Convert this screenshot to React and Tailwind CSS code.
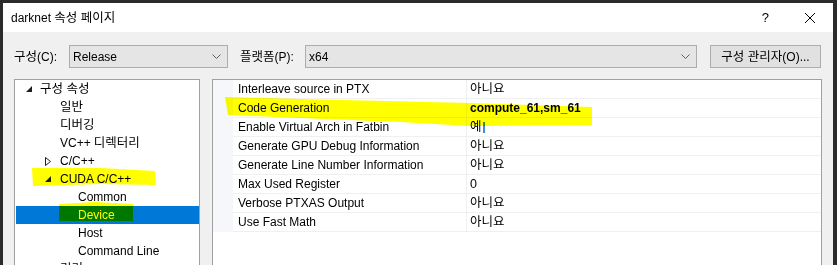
import React from "react";

const Chevron = () => (
  <svg width="9" height="6" viewBox="0 0 9 6" className="shrink-0">
    <polyline points="0.5,0.5 4.5,4.5 8.5,0.5" fill="none" stroke="#606060" strokeWidth="1" />
  </svg>
);

const Combo = ({ w, text }) => (
  <div className={`${w} h-[23px] flex items-center border border-[#acacac] bg-[#e5e5e5] pl-[3px] pr-[6px] shrink-0`}>
    <span className="flex-1 leading-[14px]">{text}</span>
    <Chevron />
  </div>
);

const Filled = () => (
  <svg width="7" height="7" viewBox="0 0 7 7" className="shrink-0">
    <polygon points="6,0 6,6 0,6" fill="#1e1e1e" />
  </svg>
);

const Hollow = () => (
  <svg width="7" height="9" viewBox="0 0 7 9" className="shrink-0">
    <polygon points="0.5,0.5 5.5,4.5 0.5,8.5" fill="none" stroke="#1e1e1e" strokeWidth="1" />
  </svg>
);

const rows = [
  ["Interleave source in PTX", "아니요"],
  ["Code Generation", "compute_61,sm_61", true],
  ["Enable Virtual Arch in Fatbin", "예", false, true],
  ["Generate GPU Debug Information", "아니요"],
  ["Generate Line Number Information", "아니요"],
  ["Max Used Register", "0"],
  ["Verbose PTXAS Output", "아니요"],
  ["Use Fast Math", "아니요"],
];

const ko = "text-[12.5px]";

export default function App() {
  return (
    <div className="relative w-[837px] h-[265px] overflow-hidden bg-[#2b2b2b] pt-[3px] pl-[3px] pr-[4px] font-['Liberation_Sans','Noto_Sans_CJK_KR',sans-serif] text-[12px] text-black">
      <div className="h-full bg-[#f0f0f0] flex flex-col overflow-hidden">
        {/* title bar */}
        <div className="h-[29px] bg-white flex items-center pl-[8px] shrink-0">
          <span className="leading-[14px]">darknet <span className={ko}>속성 페이지</span></span>
          <span className="ml-auto mr-[36px] text-[13px] leading-[14px]">?</span>
          <svg width="10" height="10" viewBox="0 0 10 10" className="mr-[18px]">
            <line x1="0" y1="0" x2="10" y2="10" stroke="#000" strokeWidth="1" />
            <line x1="10" y1="0" x2="0" y2="10" stroke="#000" strokeWidth="1" />
          </svg>
        </div>
        {/* toolbar */}
        <div className="mt-[13px] h-[23px] flex items-center pl-[11px] shrink-0">
          <span className="w-[55px] shrink-0 leading-[14px]"><span className={ko}>구성</span>(C):</span>
          <Combo w="w-[159px]" text="Release" />
          <span className="ml-[12px] w-[65px] shrink-0 leading-[14px]"><span className={ko}>플랫폼</span>(P):</span>
          <Combo w="w-[392px]" text="x64" />
          <div className="ml-[13px] w-[111px] h-[23px] flex items-center justify-center border border-[#adadad] bg-[#e1e1e1] shrink-0 leading-[14px]">
            <span className={ko}>구성 관리자</span>(O)...
          </div>
        </div>
        {/* panels */}
        <div className="mt-[11px] flex pl-[11px] h-[220px] shrink-0">
          <div className="w-[186px] shrink-0 border border-[#a0a0a0] bg-white flex flex-col">
            <div className="h-[18px] shrink-0 flex items-center pl-[11px]">
              <span className="w-[14px] flex"><Filled /></span>
              <span className={`leading-[14px] ${ko}`}>구성 속성</span>
            </div>
            <div className={`h-[18px] shrink-0 flex items-center pl-[45px] leading-[14px] ${ko}`}>일반</div>
            <div className={`h-[18px] shrink-0 flex items-center pl-[45px] leading-[14px] ${ko}`}>디버깅</div>
            <div className="h-[18px] shrink-0 flex items-center pl-[45px] leading-[14px]">VC++ <span className={`ml-[3px] ${ko}`}>디렉터리</span></div>
            <div className="h-[18px] shrink-0 flex items-center pl-[30px]">
              <span className="w-[15px] flex"><Hollow /></span>
              <span className="leading-[14px]">C/C++</span>
            </div>
            <div className="h-[18px] shrink-0 flex items-center pl-[30px]">
              <span className="w-[15px] flex"><Filled /></span>
              <span className="leading-[14px]">CUDA C/C++</span>
            </div>
            <div className="h-[18px] shrink-0 flex items-center pl-[63px] leading-[14px]">Common</div>
            <div className="h-[18px] shrink-0 flex items-center pl-[62px] ml-[1px] bg-[#0078d7] text-white leading-[14px]">Device</div>
            <div className="h-[18px] shrink-0 flex items-center pl-[63px] leading-[14px]">Host</div>
            <div className="h-[18px] shrink-0 flex items-center pl-[63px] leading-[14px]">Command Line</div>
            <div className={`h-[18px] shrink-0 flex items-center pl-[45px] leading-[14px] ${ko}`}>링커</div>
          </div>
          <div className="ml-[12px] w-[610px] shrink-0 border border-[#a0a0a0] bg-white flex flex-col">
            {rows.map(([name, value, bold, cursor]) => (
              <div key={name} className="h-[19px] flex shrink-0">
                <div className="w-[20px] bg-[#f5f7fa] shrink-0" />
                <div className="flex-1 flex border-b border-[#f0f0f0]">
                  <div className="w-[234px] shrink-0 flex items-center pl-[5px] border-r border-[#f0f0f0] leading-[14px]">{name}</div>
                  <div className={`flex-1 flex items-center pl-[3px] leading-[14px] ${bold ? "font-bold" : ko}`}>
                    {value}
                    {cursor && <span className="ml-[1px] w-[2px] h-[11px] bg-[#3c8ce0]" />}
                  </div>
                </div>
              </div>
            ))}
          </div>
        </div>
      </div>
      {/* highlighter marks */}
      <svg className="absolute left-0 top-0 w-[837px] h-[265px] mix-blend-multiply pointer-events-none" viewBox="0 0 837 265">
        <polygon points="32,168 100,168 155,171 156,185 100,184 33,186" fill="#ffff00" />
        <polygon points="59,204 95,202 133,204 133,221 59,221" fill="#ffff00" />
        <polygon points="225,97 300,99 470,103 592,107 592,125 470,126 400,122 300,118 228,115" fill="#ffff00" />
      </svg>
    </div>
  );
}
